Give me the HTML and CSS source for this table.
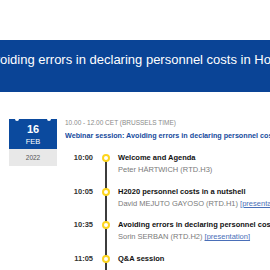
FILE: index.html
```html
<!DOCTYPE html>
<html>
<head>
<meta charset="utf-8">
<link rel="stylesheet" href="styles.css">
</head>
<body>
<div class="topspace"></div>
<header class="banner">
  <h1 class="banner-title">Avoiding errors in declaring personnel costs in Horizon 2020</h1>
</header>
<section class="event">
  <div class="date">
    <div class="date-main">
      <span class="notch notch-l"></span>
      <span class="notch notch-r"></span>
      <div class="day">16</div>
      <div class="month">FEB</div>
    </div>
    <div class="year">2022</div>
  </div>
  <div class="details">
    <div class="timehead">10.00 - 12.00 CET (BRUSSELS TIME)</div>
    <div class="webinar">Webinar session: Avoiding errors in declaring personnel costs in Horizon 2020</div>
    <ul class="schedule">
      <li class="item">
        <span class="time">10:00</span>
        <span class="dot"></span>
        <div class="text">
          <div class="title">Welcome and Agenda</div>
          <div class="sub">Peter HÄRTWICH (RTD.H3)</div>
        </div>
      </li>
      <li class="item">
        <span class="time">10:05</span>
        <span class="dot"></span>
        <div class="text">
          <div class="title">H2020 personnel costs in a nutshell</div>
          <div class="sub">David MEJUTO GAYOSO (RTD.H1) <a href="#">[presentation]</a></div>
        </div>
      </li>
      <li class="item">
        <span class="time">10:35</span>
        <span class="dot"></span>
        <div class="text">
          <div class="title">Avoiding errors in declaring personnel costs</div>
          <div class="sub">Sorin SERBAN (RTD.H2) <a href="#">[presentation]</a></div>
        </div>
      </li>
      <li class="item">
        <span class="time">11:05</span>
        <span class="dot"></span>
        <div class="text">
          <div class="title">Q&amp;A session</div>
          <div class="sub">&nbsp;</div>
        </div>
      </li>
    </ul>
  </div>
</section>
</body>
</html>
```
FILE: styles.css
```css
html, body {
  margin: 0;
  padding: 0;
  background: #ffffff;
  overflow: hidden;
}
body {
  width: 270px;
  height: 270px;
  font-family: "Liberation Sans", Arial, sans-serif;
  color: #222;
}
.topspace {
  height: 40px;
}
.banner {
  height: 52px;
  background: #0a4496;
  overflow: hidden;
}
.banner-title {
  margin: 0 0 0 -15px;
  padding-top: 12px;
  font-size: 13px;
  line-height: 16px;
  font-weight: normal;
  color: #ffffff;
  white-space: nowrap;
}
.event {
  display: flex;
  gap: 8px;
  padding: 27px 0 0 9px;
}
.date {
  width: 48px;
  flex: none;
}
.date-main {
  position: relative;
  height: 30px;
  background: #0b4a9e;
  color: #fff;
  text-align: center;
  padding-top: 4px;
  box-sizing: border-box;
}
.notch {
  position: absolute;
  top: -2px;
  width: 4px;
  height: 4px;
  border-radius: 50%;
  background: #fff;
}
.notch-l { left: 6px; }
.notch-r { right: 6px; }
.day {
  font-size: 11px;
  line-height: 12px;
  font-weight: bold;
}
.month {
  margin-top: 1.5px;
  font-size: 7.5px;
  line-height: 9px;
}
.year {
  height: 17px;
  line-height: 17px;
  background: #e8e8e8;
  color: #555;
  text-align: center;
  font-size: 6.5px;
}
.details {
  flex: 1;
  min-width: 0;
  overflow: hidden;
}
.timehead {
  font-size: 6.5px;
  line-height: 8px;
  color: #8a8a8a;
  white-space: nowrap;
}
.webinar {
  margin-top: 4px;
  font-size: 7.2px;
  line-height: 9px;
  font-weight: bold;
  color: #154a9c;
  white-space: nowrap;
}
.schedule {
  position: relative;
  list-style: none;
  margin: 12px 0 0 0;
  padding: 0;
}
.schedule::before {
  content: "";
  position: absolute;
  left: 39.5px;
  top: 6px;
  bottom: -40px;
  width: 2px;
  background: #3c3c3c;
}
.item {
  display: grid;
  grid-template-columns: 28px 8px 1fr;
  column-gap: 8.5px;
  align-items: start;
  padding-bottom: 9.7px;
}
.time {
  text-align: right;
  font-size: 7.5px;
  line-height: 12px;
  font-weight: bold;
  color: #333;
}
.dot {
  position: relative;
  margin-top: 2px;
  width: 8px;
  height: 8px;
  box-sizing: border-box;
  border: 2px solid #fdd51e;
  border-radius: 50%;
  background: #fff;
}
.text {
  min-width: 0;
  white-space: nowrap;
}
.title {
  font-size: 7.5px;
  line-height: 12px;
  font-weight: bold;
  color: #111;
}
.sub {
  font-size: 7.5px;
  line-height: 12px;
  color: #7a7a7a;
}
.sub a {
  color: #4a6fb8;
  text-decoration: underline;
}
```
